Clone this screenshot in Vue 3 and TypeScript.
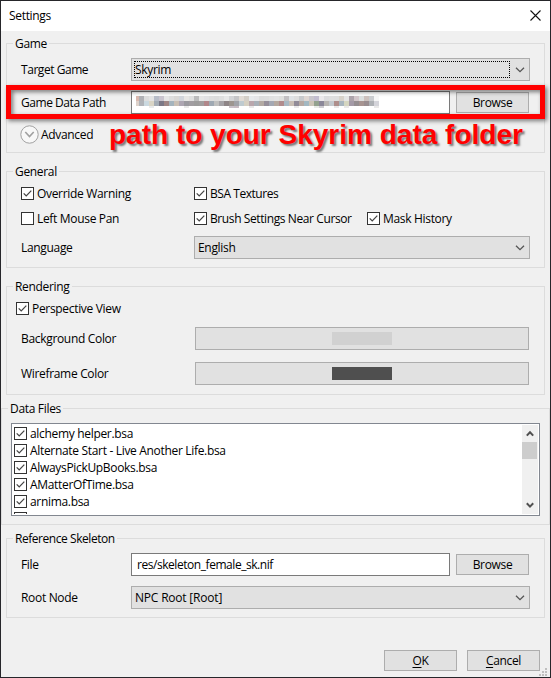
<script setup lang="ts">
import { ref } from 'vue'

interface DataFile {
  name: string
  checked: boolean
}

const overrideWarning = ref(true)
const bsaTextures = ref(true)
const leftMousePan = ref(false)
const brushNearCursor = ref(true)
const maskHistory = ref(true)
const perspectiveView = ref(true)

const files = ref<DataFile[]>([
  { name: 'alchemy helper.bsa', checked: true },
  { name: 'Alternate Start - Live Another Life.bsa', checked: true },
  { name: 'AlwaysPickUpBooks.bsa', checked: true },
  { name: 'AMatterOfTime.bsa', checked: true },
  { name: 'arnima.bsa', checked: true },
  { name: '', checked: false },
])

// Colours of the pixelated path, one string per row of 5px cells.
const mosaic: string[] = [
  'd9b8ae b0b1b5 dddddd e4e4e4 b8bdc8 cac5cf e6e6e6 dedede dad8d6 d3d6dc e8e6e4 e0e0e0 bcbcbd e6e6e6 e2e2e4 dedede dcdcdc e0e0e0 e8e8e8 d4d5d7 c6c6c8 e2dcd6 d4cfc8 e8eaec e6e6e8 dddddd dedede e2e2e2 e4e4e4 e0e0de c3c1c3 e0e3e6 dedede c8cacd dfd7d3 cac7cd c3bed0 ebe9eb dcdcde dfdfdf dedede d8d3cb e5e5e5 ada4ab d2c6ca dcdfdf cdc1bd cbcdd0 f6f6f6',
  'ddd2cb b0b3b8 cad8df d9d5c6 a4adb6 7b7987 9f8786 a5b4bd c9bfb4 ada6b2 9a999f a19da1 9d9c9c a19e9f b1878a 9fa9b3 c0c0bf a5a3a7 8e8587 9d9690 a1a3a9 bfcbd0 d6d0c2 b9a7ad a8b0b8 b3aaa3 968f9a a4a9b4 b5a9a0 b18c8d a9b9c4 c8beb5 918b98 b6a9a3 a3b8c2 ccc5b8 93a28f 8b8899 b8b5b2 c3c9ce ae8e8b a9b6bf d5d6c1 a49aa7 958e91 a79491 998d90 aeb1b5 d4d4da',
  'ffffff ffffff ffffff e9ebec ffffff ffffff ffffff ffffff ffffff ffffff e9e9e9 ffffff ffffff ffffff ffffff ffffff ffffff ffffff ffffff c9c1ca c8bcc3 ffffff ffffff e9e9e9 ffffff ffffff ffffff ffffff ffffff ffffff ffffff ffffff e9e9e9 ffffff ffffff ffffff e9ece8 cfced2 ffffff ffffff e8e8e8 ffffff e9e9e9 ffffff ffffff ffffff ffffff ffffff e9e9e9',
]
const cells = mosaic.flatMap((row) => row.split(' '))
</script>

<template>
  <div class="dialog">
    <header class="titlebar">
      <span>Settings</span>
      <svg class="close" width="11" height="11" viewBox="0 0 11 11"><path d="M.5.5l10 10M10.5.5l-10 10" /></svg>
    </header>

    <section class="group game">
      <h2 class="legend">Game</h2>
      <div class="row">
        <span class="label tight">Target Game</span>
        <div class="combo focused">
          <span>Skyrim</span>
          <svg class="chev" width="10" height="6" viewBox="0 0 10 6"><path d="M1 .7l4 4 4-4" /></svg>
        </div>
      </div>
      <div class="row path-row">
        <span class="label tight">Game Data Path</span>
        <div class="field">
          <div class="mosaic"><i v-for="(c, i) in cells" :key="i" :style="{ background: '#' + c }"></i></div>
        </div>
        <button class="btn">Browse</button>
      </div>
      <div class="advanced">
        <svg width="19" height="19" viewBox="0 0 19 19">
          <circle cx="9.5" cy="9.5" r="8.7" fill="#f8f8f8" stroke="#a0a0a0" />
          <path d="M5.3 7l4.2 4.5L13.7 7" fill="none" stroke="#a0a0a0" stroke-width="1.6" />
        </svg>
        <span>Advanced</span>
      </div>
      <div class="highlight"></div>
      <div class="note">path to your Skyrim data folder</div>
    </section>

    <section class="group general">
      <h2 class="legend">General</h2>
      <div class="checks">
        <label class="check"><input v-model="overrideWarning" type="checkbox" /><svg viewBox="0 0 13 13"><path d="M2 6.3l3 3 6-6.2" /></svg>Override Warning</label>
        <label class="check tight"><input v-model="bsaTextures" type="checkbox" /><svg viewBox="0 0 13 13"><path d="M2 6.3l3 3 6-6.2" /></svg>BSA Textures</label>
        <span></span>
        <label class="check"><input v-model="leftMousePan" type="checkbox" /><svg viewBox="0 0 13 13"><path d="M2 6.3l3 3 6-6.2" /></svg>Left Mouse Pan</label>
        <label class="check brush"><input v-model="brushNearCursor" type="checkbox" /><svg viewBox="0 0 13 13"><path d="M2 6.3l3 3 6-6.2" /></svg>Brush Settings Near Cursor</label>
        <label class="check"><input v-model="maskHistory" type="checkbox" /><svg viewBox="0 0 13 13"><path d="M2 6.3l3 3 6-6.2" /></svg>Mask History</label>
      </div>
      <div class="row wide">
        <span class="label">Language</span>
        <div class="combo">
          <span>English</span>
          <svg class="chev" width="10" height="6" viewBox="0 0 10 6"><path d="M1 .7l4 4 4-4" /></svg>
        </div>
      </div>
    </section>

    <section class="group rendering">
      <h2 class="legend">Rendering</h2>
      <label class="check"><input v-model="perspectiveView" type="checkbox" /><svg viewBox="0 0 13 13"><path d="M2 6.3l3 3 6-6.2" /></svg>Perspective View</label>
      <div class="row wide">
        <span class="label">Background Color</span>
        <button class="color"><i class="swatch light"></i></button>
      </div>
      <div class="row wide">
        <span class="label">Wireframe Color</span>
        <button class="color"><i class="swatch dark"></i></button>
      </div>
    </section>

    <section class="group data">
      <h2 class="legend">Data Files</h2>
      <div class="list">
        <div class="items">
          <label v-for="(f, i) in files" :key="i" class="check item">
            <input v-model="f.checked" type="checkbox" /><svg viewBox="0 0 13 13"><path d="M2 6.3l3 3 6-6.2" /></svg>{{ f.name }}
          </label>
        </div>
        <div class="scroll">
          <svg width="8" height="7" viewBox="0 0 8 7"><path d="M.8 5.6L4 2.2l3.2 3.4" /></svg>
          <div class="thumb"></div>
          <svg class="down" width="8" height="7" viewBox="0 0 8 7"><path d="M.8 1.2L4 4.6l3.2-3.4" /></svg>
        </div>
      </div>
    </section>

    <section class="group skeleton">
      <h2 class="legend tight">Reference Skeleton</h2>
      <div class="row">
        <span class="label">File</span>
        <div class="field"><span class="tight">res/skeleton_female_sk.nif</span></div>
        <button class="btn">Browse</button>
      </div>
      <div class="row">
        <span class="label">Root Node</span>
        <div class="combo root">
          <span>NPC Root [Root]</span>
          <svg class="chev" width="10" height="6" viewBox="0 0 10 6"><path d="M1 .7l4 4 4-4" /></svg>
        </div>
      </div>
    </section>

    <footer class="actions">
      <button class="btn"><u>O</u>K</button>
      <button class="btn"><u>C</u>ancel</button>
    </footer>
    <svg class="grip" width="8" height="8" viewBox="0 0 8 8">
      <path d="M6 0h2v2H6zM3 3h2v2H3zM6 3h2v2H6zM0 6h2v2H0zM3 6h2v2H3zM6 6h2v2H6z" fill="#bfbfbf" />
    </svg>
  </div>
</template>

<style>
body { margin: 0; background: #222; }
</style>

<style scoped>
* { box-sizing: border-box; }
.dialog {
  position: relative;
  width: 551px;
  height: 678px;
  border: 1px solid #26262a;
  background: #f0f0f0;
  color: #000;
  font: 12px/16px "Open Sans", "Noto Sans", sans-serif;
  letter-spacing: -0.32px;
  white-space: nowrap;
  overflow: hidden;
}
.titlebar {
  display: flex;
  justify-content: space-between;
  align-items: center;
  height: 30px;
  padding: 0 9px 0 8px;
  background: #fff;
}
.close { margin-top: -2px; fill: none; stroke: #111; stroke-width: 1.1; }
.group { position: relative; width: 539px; margin-left: 5px; border: 1px solid #dcdcdc; }
.legend {
  position: absolute;
  top: -8px;
  left: 6px;
  margin: 0;
  padding: 0 2px;
  background: #f0f0f0;
  font: inherit;
}
.tight { letter-spacing: -0.45px; }
.brush { letter-spacing: -0.4px; }
.root { letter-spacing: -0.2px; }
.game { height: 110px; margin-top: 12px; padding: 14px 14px 0; }
.general { height: 97px; margin-top: 18px; padding: 15px 14px 0; }
.rendering { height: 109px; margin-top: 18px; padding: 15px 15px 0 14px; }
.data { width: 549px; height: 117px; margin: 13px 0 0; padding: 14px 9px 0; }
.skeleton { height: 80px; margin-top: 13px; padding: 14px 14px 0; }
.row { display: flex; align-items: center; height: 23px; }
.row + .row { margin-top: 10px; }
.label { width: 110px; flex: none; }
.wide .label { width: 173px; }
.combo {
  position: relative;
  display: flex;
  justify-content: space-between;
  align-items: center;
  flex: 1;
  height: 23px;
  padding: 1px 4px 0 3px;
  border: 1px solid #adadad;
  background: #e1e1e1;
}
.focused::after {
  content: "";
  position: absolute;
  inset: 2px 19px 2px 2px;
  border: 1px dotted #000;
}
.chev { fill: none; stroke: #555; stroke-width: 1.3; }
.field {
  width: 319px;
  height: 23px;
  padding: 3px 5px 0;
  border: 1px solid #7a7a7a;
  background: #fff;
}
.btn {
  display: block;
  width: 73px;
  height: 21px;
  padding: 0;
  border: 1px solid #adadad;
  border-radius: 0;
  background: #e1e1e1;
  color: #000;
  font: inherit;
  letter-spacing: inherit;
  line-height: 19px;
  text-align: center;
}
.row .btn { margin-left: 6px; }
.path-row .field { padding: 4px 4px 0; }
.mosaic {
  display: grid;
  grid-template-columns: 3px repeat(48, 5px);
  grid-template-rows: 5px 5px 2px;
}
.advanced { display: flex; align-items: center; gap: 2px; height: 19px; margin: 11px 0 0 -1px; }
.highlight {
  position: absolute;
  top: 41px;
  left: -1px;
  width: 539px;
  height: 34px;
  border: 5px solid #f00;
  filter: drop-shadow(2px 2px 2px rgba(0, 0, 0, 0.5));
}
.note {
  position: absolute;
  top: 75px;
  left: 102px;
  color: #f00;
  font: bold 28px/31px "Liberation Sans", Arial, sans-serif;
  letter-spacing: 0;
  text-shadow: 2px 2px 2px rgba(0, 0, 0, 0.5);
}
.checks {
  display: grid;
  grid-template-columns: 173px 173px 1fr;
  grid-auto-rows: 13px;
  row-gap: 12px;
}
.check { display: flex; align-items: flex-start; height: 13px; line-height: 14px; }
.check input { position: absolute; opacity: 0; }
.check svg {
  flex: none;
  width: 13px;
  height: 13px;
  margin-right: 3px;
  border: 1px solid #333;
  background: #fff;
}
.check path { fill: none; stroke: #444; stroke-width: 1.5; visibility: hidden; }
.check input:checked + svg path { visibility: visible; }
.general .row { margin-top: 11px; }
.rendering .check { margin-left: -5px; }
.rendering .row { margin-top: 12px; }
.rendering .wide .label { width: 174px; }
.color {
  display: flex;
  align-items: flex-start;
  justify-content: center;
  flex: 1;
  height: 23px;
  padding: 4px 0 0;
  border: 1px solid #adadad;
  border-radius: 0;
  background: #e1e1e1;
}
.swatch { width: 60px; height: 13px; }
.light { background: #d1d1d1; }
.dark { background: #4f4f4f; }
.list {
  display: flex;
  width: 529px;
  height: 93px;
  padding: 1px;
  border: 1px solid #828790;
  background: #fff;
}
.items { flex: 1; padding: 2px 0 0 1px; overflow: hidden; }
.item { margin-bottom: 4px; }
.scroll {
  display: flex;
  flex-direction: column;
  align-items: flex-start;
  width: 16px;
  padding-top: 5px;
  background: #f0f0f0;
}
.scroll svg { margin-left: 4px; fill: none; stroke: #505050; stroke-width: 2; }
.scroll .down { margin: auto 0 5px 4px; }
.thumb { width: 15px; height: 17px; margin-top: 5px; background: #cdcdcd; }
.actions { display: flex; justify-content: flex-end; gap: 10px; margin: 32px 10px 0 0; }
.actions u { text-underline-offset: 2px; }
.grip { position: absolute; right: 3px; bottom: 1px; }
</style>
